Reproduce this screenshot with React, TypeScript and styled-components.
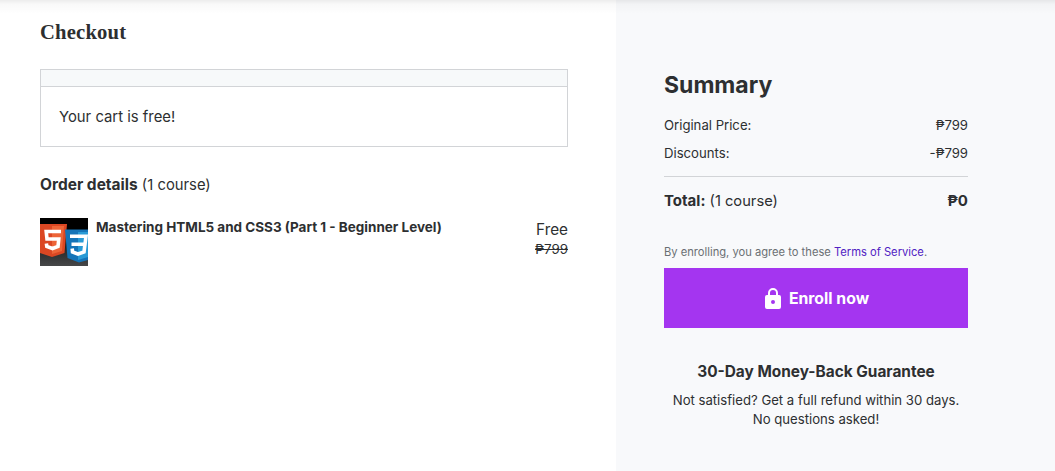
import React from 'react';
import styled, { createGlobalStyle } from 'styled-components';

const GlobalStyle = createGlobalStyle`
  * { box-sizing: border-box; }
  body {
    margin: 0;
    background: #fff;
    color: #2d2f31;
    font-family: Inter, Roboto, sans-serif;
    font-size: 13.15px;
  }
  h1, h2, h3, p { margin: 0; }
`;

const bold = `
  font-family: Inter, Roboto, sans-serif;
  font-weight: 700;
`;

const Page = styled.div`
  display: grid;
  grid-template-columns: 616px 1fr;
  height: 471px;
  overflow: hidden;
  position: relative;
`;

const HeaderShadow = styled.div`
  position: absolute;
  inset: 0 0 auto;
  height: 14px;
  background: linear-gradient(rgba(0, 0, 0, 0.075), rgba(0, 0, 0, 0.025) 30%, rgba(0, 0, 0, 0.01) 65%, transparent);
  pointer-events: none;
`;

const Main = styled.main`
  padding: 20px 48px 0 40px;
`;

const Title = styled.h1`
  font: 700 20.6px/24px "Liberation Serif", serif;
  letter-spacing: 0.2px;
`;

const Notice = styled.section`
  margin-top: 25px;
  border: 1px solid #d2d4d7;
`;

const NoticeBar = styled.div`
  height: 17px;
  background: #f7f9fa;
  border-bottom: 1px solid #d2d4d7;
`;

const NoticeText = styled.p`
  padding: 18px 18px 17px;
  font-size: 14.85px;
  line-height: 24px;
`;

const OrderHeading = styled.h2`
  margin-top: 26px;
  font-size: 14.8px;
  font-weight: 400;
  line-height: 24px;
`;

const Strong = styled.strong<{ $size?: number }>`
  ${bold}
  font-size: ${({ $size = 15.5 }) => $size}px;
`;

const Course = styled.article`
  display: flex;
  gap: 8px;
  margin-top: 21px;
`;

const Thumbnail = styled.svg`
  width: 48px;
  height: 48px;
  flex: none;
`;

const CourseName = styled.h3`
  ${bold}
  flex: 1;
  font-size: 13.5px;
  line-height: 19px;
`;

const CoursePrice = styled.div`
  display: flex;
  flex-direction: column;
  align-items: flex-end;
  padding-top: 2px;
  font-size: 15.3px;
  line-height: 20px;
`;

const OldPrice = styled.s`
  font-size: 13.4px;
  line-height: 18px;
`;

const Summary = styled.aside`
  padding: 70px 87px 0 48px;
  background: #f8f9fb;
`;

const SummaryTitle = styled.h2`
  ${bold}
  font-size: 23px;
  line-height: 30px;
`;

const PriceRow = styled.div`
  display: flex;
  justify-content: space-between;
  line-height: 20px;
  margin-top: 8px;
`;

const PriceList = styled.div`
  margin-top: 15px;
  padding-bottom: 13px;
  border-bottom: 1px solid #d2d4d7;

  ${PriceRow}:first-child { margin-top: 0; }
`;

const TotalRow = styled(PriceRow)`
  margin-top: 12px;
  font-size: 14.7px;
  line-height: 24px;
`;

const Terms = styled.p`
  margin-top: 31px;
  color: #6a6f73;
  font-size: 11.2px;
  line-height: 17px;
  letter-spacing: -0.01px;
`;

const TermsLink = styled.a`
  color: #5022c3;
  text-decoration: none;
`;

const EnrollButton = styled.button`
  ${bold}
  display: flex;
  align-items: center;
  justify-content: center;
  gap: 8px;
  width: 100%;
  height: 60px;
  margin-top: 7px;
  padding: 0 0 0 2px;
  border: 0;
  background: #a435f0;
  color: #fff;
  font-size: 15.8px;
`;

const Guarantee = styled.section`
  margin-top: 32px;
  text-align: center;
  line-height: 19px;
`;

const GuaranteeTitle = styled.h3`
  ${bold}
  font-size: 15.4px;
  line-height: 24px;
  margin-bottom: 7px;
`;

const CourseThumbnail = () => (
  <Thumbnail viewBox="0 0 48 48" aria-hidden="true">
    <defs>
      <linearGradient id="backdrop" x1="0" y1="0" x2="0" y2="1">
        <stop offset="0.25" stopColor="#000" />
        <stop offset="0.75" stopColor="#303132" />
        <stop offset="1" stopColor="#464748" />
      </linearGradient>
    </defs>
    <path fill="url(#backdrop)" d="M0 0h48v48H0z" />
    <path fill="#db4723" d="M0 6H27L24.5 35L12 39L0 35Z" />
    <path fill="#ed6538" d="M12 8H24L22 33L12 36Z" />
    <path fill="none" stroke="#fff" strokeWidth="3.6" d="M21 13.5H6.2L7 21H18.8L18 28.5L12.5 30.5L6.8 28.5L6.4 25.5" />
    <path fill="#1474b8" d="M25 11.5H48V42L39 44.5L27.5 40Z" />
    <path fill="#299bd6" d="M38 14H48V39L38 42Z" />
    <path fill="none" stroke="#fff" strokeWidth="3.6" d="M30 18.3H46L45 26.2H31.5M45 26L44 34L38 36L32.5 34L32.2 30.5" />
  </Thumbnail>
);

const LockIcon = () => (
  <svg width="16" height="21" viewBox="0 0 16 21" aria-hidden="true">
    <path fill="none" stroke="#fff" strokeWidth="2" d="M4 8V5a4 4 0 0 1 8 0v3" />
    <path fill="#fff" fillRule="evenodd" d="M2 7h12a2 2 0 0 1 2 2v10a2 2 0 0 1-2 2H2a2 2 0 0 1-2-2V9a2 2 0 0 1 2-2Zm6 5a2 2 0 1 0 0 4 2 2 0 0 0 0-4Z" />
  </svg>
);

export default function App() {
  return (
    <Page>
      <GlobalStyle />
      <Main>
        <Title>Checkout</Title>
        <Notice>
          <NoticeBar />
          <NoticeText>Your cart is free!</NoticeText>
        </Notice>
        <OrderHeading><Strong>Order details</Strong> (1 course)</OrderHeading>
        <Course>
          <CourseThumbnail />
          <CourseName>Mastering HTML5 and CSS3 (Part 1 - Beginner Level)</CourseName>
          <CoursePrice>
            Free
            <OldPrice>₱799</OldPrice>
          </CoursePrice>
        </Course>
      </Main>
      <Summary>
        <SummaryTitle>Summary</SummaryTitle>
        <PriceList>
          <PriceRow><span>Original Price:</span><span>₱799</span></PriceRow>
          <PriceRow><span>Discounts:</span><span>-₱799</span></PriceRow>
        </PriceList>
        <TotalRow>
          <span><Strong $size={15}>Total:</Strong> (1 course)</span>
          <Strong $size={15}>₱0</Strong>
        </TotalRow>
        <Terms>By enrolling, you agree to these <TermsLink>Terms of Service</TermsLink>.</Terms>
        <EnrollButton><LockIcon />Enroll now</EnrollButton>
        <Guarantee>
          <GuaranteeTitle>30-Day Money-Back Guarantee</GuaranteeTitle>
          <p>Not satisfied? Get a full refund within 30 days.<br />No questions asked!</p>
        </Guarantee>
      </Summary>
      <HeaderShadow />
    </Page>
  );
}
